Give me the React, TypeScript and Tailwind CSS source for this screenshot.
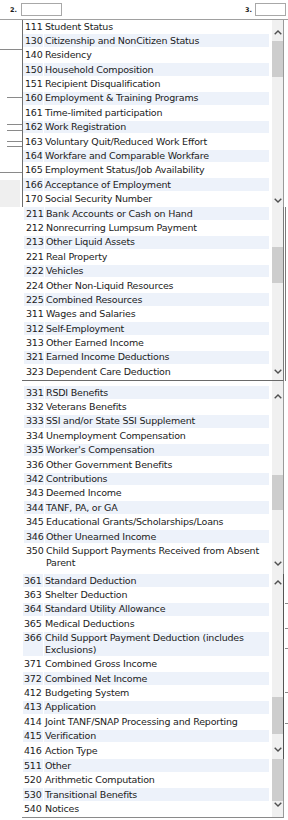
import React from "react";

type Row = [string, string];

const box1: Row[] = [
  ["111", "Student Status"],
  ["130", "Citizenship and NonCitizen Status"],
  ["140", "Residency"],
  ["150", "Household Composition"],
  ["151", "Recipient Disqualification"],
  ["160", "Employment & Training Programs"],
  ["161", "Time-limited participation"],
  ["162", "Work Registration"],
  ["163", "Voluntary Quit/Reduced Work Effort"],
  ["164", "Workfare and Comparable Workfare"],
  ["165", "Employment Status/Job Availability"],
  ["166", "Acceptance of Employment"],
  ["170", "Social Security Number"],
];

const box2: Row[] = [
  ["211", "Bank Accounts or Cash on Hand"],
  ["212", "Nonrecurring Lumpsum Payment"],
  ["213", "Other Liquid Assets"],
  ["221", "Real Property"],
  ["222", "Vehicles"],
  ["224", "Other Non-Liquid Resources"],
  ["225", "Combined Resources"],
  ["311", "Wages and Salaries"],
  ["312", "Self-Employment"],
  ["313", "Other Earned Income"],
  ["321", "Earned Income Deductions"],
  ["323", "Dependent Care Deduction"],
];

const box3: Row[] = [
  ["331", "RSDI Benefits"],
  ["332", "Veterans Benefits"],
  ["333", "SSI and/or State SSI Supplement"],
  ["334", "Unemployment Compensation"],
  ["335", "Worker's Compensation"],
  ["336", "Other Government Benefits"],
  ["342", "Contributions"],
  ["343", "Deemed Income"],
  ["344", "TANF, PA, or GA"],
  ["345", "Educational Grants/Scholarships/Loans"],
  ["346", "Other Unearned Income"],
  ["350", "Child Support Payments Received from Absent Parent"],
];

const box4: Row[] = [
  ["361", "Standard Deduction"],
  ["363", "Shelter Deduction"],
  ["364", "Standard Utility Allowance"],
  ["365", "Medical Deductions"],
  ["366", "Child Support Payment Deduction (includes Exclusions)"],
  ["371", "Combined Gross Income"],
  ["372", "Combined Net Income"],
  ["412", "Budgeting System"],
  ["413", "Application"],
  ["414", "Joint TANF/SNAP Processing and Reporting"],
  ["415", "Verification"],
  ["416", "Action Type"],
];

const box5: Row[] = [
  ["511", "Other"],
  ["520", "Arithmetic Computation"],
  ["530", "Transitional Benefits"],
  ["540", "Notices"],
];

function Chevron({ up }: { up?: boolean }) {
  return (
    <svg width="8" height="5" viewBox="0 0 8 5" className="block">
      <path
        d={up ? "M0.7 4.3 L4 1 L7.3 4.3" : "M0.7 0.7 L4 4 L7.3 0.7"}
        fill="none"
        stroke="#505050"
        strokeWidth="1.4"
      />
    </svg>
  );
}

function ListRow({
  n,
  t,
  shaded,
  numPad,
}: {
  n: string;
  t: string;
  shaded: boolean;
  numPad: string;
}) {
  const bg = shaded ? "bg-[#edf2fa]" : "bg-white";
  return (
    <div className="flex gap-[1px] mb-[1.7px]">
      <div
        className={`w-[20px] shrink-0 py-[0.5px] leading-[11.7px] whitespace-nowrap ${numPad} ${bg}`}
      >
        {n}
      </div>
      <div className={`flex-1 min-w-0 py-[0.5px] pl-[1px] leading-[11.7px] ${bg}`}>
        {t}
      </div>
    </div>
  );
}

function Box({
  rows,
  firstShaded,
  className,
  listClass,
  numPad,
  children,
}: {
  rows: Row[];
  firstShaded: boolean;
  className: string;
  listClass: string;
  numPad: string;
  children: React.ReactNode;
}) {
  return (
    <div className={`flex ${className}`}>
      <div className={`flex-1 min-w-0 pr-[3px] ${listClass}`}>
        {rows.map(([n, t], i) => (
          <ListRow
            key={n}
            n={n}
            t={t}
            shaded={(i % 2 === 0) === firstShaded}
            numPad={numPad}
          />
        ))}
      </div>
      <div className="w-[11px] shrink-0 bg-[#f0f0f0] flex flex-col">{children}</div>
    </div>
  );
}

function Line({ cls }: { cls: string }) {
  return <div className={`h-[1px] bg-[#8a8a8a] ${cls}`} />;
}

export default function App() {
  return (
    <div className="w-[288px] h-[820px] overflow-hidden bg-white text-[#1b1b1b] font-['DejaVu_Sans',sans-serif] text-[9.5px] tracking-[-0.2px]">
      {/* header */}
      <div className="h-[19px] flex items-start">
        <div className="w-[21px] pl-[10px] pt-[7px] text-[6.5px] leading-[7px] font-bold tracking-normal">
          2.
        </div>
        <div className="mt-[3px] w-[41px] h-[13px] border border-[#a8a8a8]" />
        <div className="flex-1" />
        <div className="w-[10px] pt-[7px] text-[6.5px] leading-[7px] font-bold tracking-normal">
          3.
        </div>
        <div className="mt-[3px] w-[31px] h-[13px] border border-[#a8a8a8] mr-[2px]" />
      </div>
      <div className="h-[1px] bg-[#a0a0a0]" />

      <div className="flex">
        {/* left background fragments */}
        <div className="w-[22px] shrink-0 flex flex-col">
          <div className="h-[29px]" />
          <Line cls="w-full" />
          <div className="h-[47px]" />
          <Line cls="ml-[7px]" />
          <div className="h-[26px]" />
          <Line cls="ml-[7px]" />
          <div className="h-[5px]" />
          <Line cls="ml-[7px]" />
          <div className="h-[10px]" />
          <Line cls="ml-[7px]" />
          <div className="h-[4px]" />
          <Line cls="ml-[7px]" />
          <div className="h-[25px]" />
          <Line cls="w-full" />
          <div className="h-[7px]" />
          <div className="h-[27px] w-[20px] bg-[#efefef]" />
        </div>

        {/* list boxes */}
        <div className="w-[262px] shrink-0 flex flex-col">
          <Box
            rows={box1}
            firstShaded={false}
            className="border-l border-l-[#6e6e6e] border-r border-r-[#9a9a9a]"
            listClass=""
            numPad="pl-[2px]"
          >
            <div className="h-[3px]" />
            <div className="h-[18px] flex items-center justify-center">
              <Chevron up />
            </div>
            <div className="h-[36px] bg-[#cdcdcd]" />
            <div className="flex-1" />
            <div className="h-[14px] flex items-center justify-center">
              <Chevron />
            </div>
          </Box>

          <Box
            rows={box2}
            firstShaded={true}
            className="pl-[1px] border-r border-r-[#7a7a7a] border-b border-b-[#6a6a6a]"
            listClass="pl-[1px]"
            numPad="pl-[2px]"
          >
            <div className="h-[39.5px]" />
            <div className="h-[36.5px] bg-[#cdcdcd]" />
            <div className="flex-1" />
            <div className="h-[14px] flex items-center justify-center">
              <Chevron />
            </div>
            <div className="h-[1.5px]" />
          </Box>

          <Box
            rows={box3}
            firstShaded={true}
            className="pl-[1px] border-r border-r-[#9a9a9a]"
            listClass="pl-[1px] pt-[5.4px] pb-[3.5px]"
            numPad="pl-[2px]"
          >
            <div className="h-[8px]" />
            <div className="h-[15.4px] flex items-center justify-center">
              <Chevron up />
            </div>
            <div className="h-[70.6px]" />
            <div className="h-[35px] bg-[#cdcdcd]" />
            <div className="flex-1" />
            <div className="h-[14px] flex items-center justify-center">
              <Chevron />
            </div>
            <div className="h-[3.4px]" />
          </Box>

          <Box
            rows={box4}
            firstShaded={true}
            className="pl-[1px] border-r border-r-[#555555]"
            listClass="pb-[0.8px]"
            numPad="pl-[1px]"
          >
            <div className="h-[17.8px] flex items-center justify-center">
              <Chevron up />
            </div>
            <div className="h-[104.8px]" />
            <div className="h-[37px] bg-[#cdcdcd]" />
            <div className="flex-1" />
            <div className="h-[14px] flex items-center justify-center">
              <Chevron />
            </div>
            <div className="h-[2.7px]" />
          </Box>

          <Box
            rows={box5}
            firstShaded={true}
            className="pl-[1px] border-r border-r-[#9a9a9a] border-b border-b-[#8a8a8a]"
            listClass=""
            numPad="pl-[1px]"
          >
            <div className="h-[42px] bg-[#cdcdcd]" />
            <div className="h-[6px] flex items-center justify-center">
              <Chevron />
            </div>
            <div className="flex-1" />
          </Box>
        </div>

        {/* right background fragments */}
        <div className="w-[4px] shrink-0 flex flex-col">
          <div className="h-[187px]" />
          <div className="h-[174px] w-[1px] ml-[1px] bg-[#7a7a7a]" />
          <div className="h-[222px]" />
          <div className="h-[1px] w-[3px] ml-[1px] bg-[#8a8a8a]" />
          <div className="h-[24px]" />
          <div className="h-[1px] w-[3px] ml-[1px] bg-[#8a8a8a]" />
          <div className="h-[19px]" />
          <div className="h-[1px] w-[3px] ml-[1px] bg-[#8a8a8a]" />
          <div className="h-[43px]" />
          <div className="h-[1px] w-[3px] ml-[1px] bg-[#8a8a8a]" />
          <div className="h-[30px]" />
          <div className="h-[1px] w-[3px] ml-[1px] bg-[#8a8a8a]" />
        </div>
      </div>
    </div>
  );
}
